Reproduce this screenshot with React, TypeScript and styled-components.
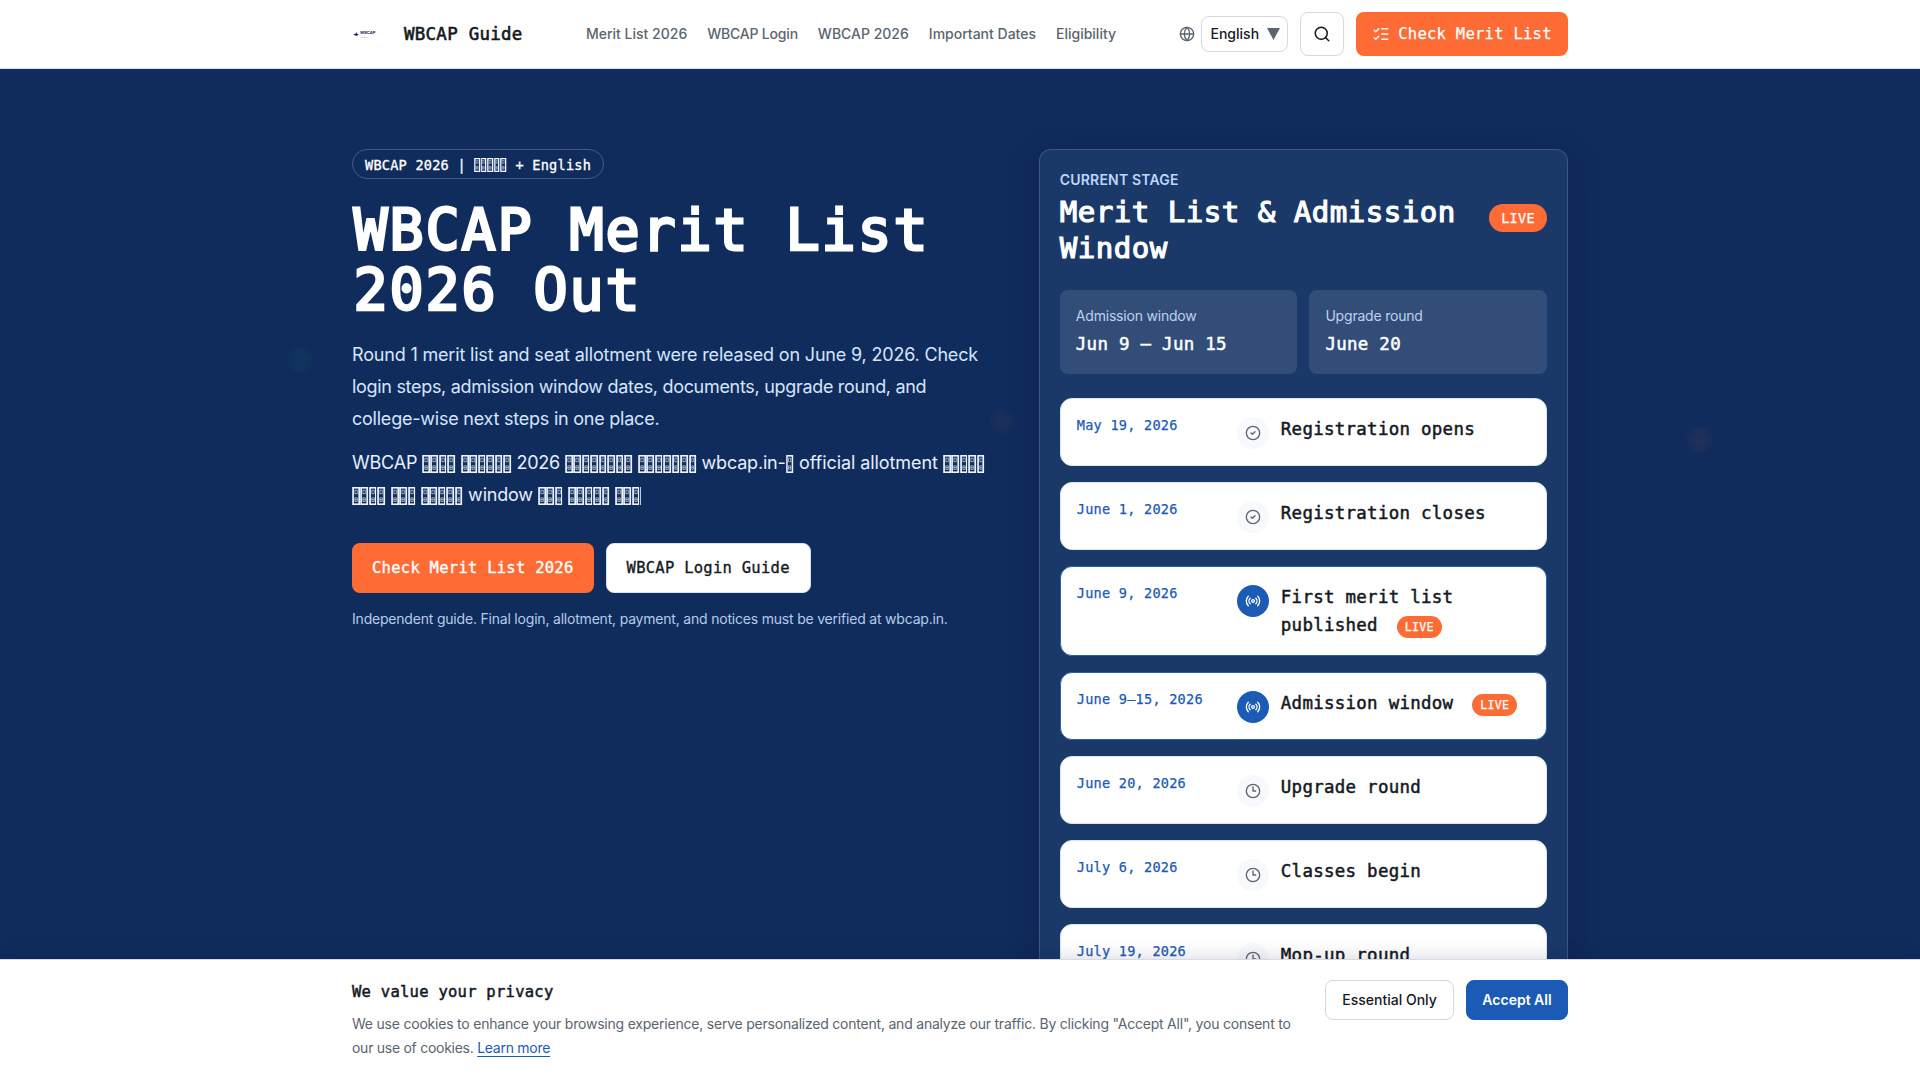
import React from "react";
import styled, { createGlobalStyle, css } from "styled-components";
import { Globe, Search, ListChecks, CircleCheck, Clock3, Radio } from "lucide-react";

const sans = `Inter, "Liberation Sans", sans-serif`;
const mono = `"DejaVu Sans Mono", "Liberation Mono", monospace`;

const Global = createGlobalStyle`
  * { box-sizing: border-box; }
  html, body { margin: 0; padding: 0; }
  body { height: 1080px; overflow: hidden; font-family: ${sans}; color: #15191f; background: #102c5c; }
  h1, h2, p { margin: 0; }
  a { text-decoration: none; color: inherit; }
`;

/* Monospace text on a 0.6em advance with a slightly reinforced stroke. */
const monoText = (size: number, weight = 0.4, scale = 0.97) => css`
  font-family: ${mono};
  font-size: ${size * scale}px;
  letter-spacing: ${size * (0.6 - 0.602 * scale)}px;
  -webkit-text-stroke: ${weight}px currentColor;
`;

const Page = styled.div`
  height: 1080px;
  display: flex;
  flex-direction: column;
  overflow: hidden;
`;

const Container = styled.div`
  width: 1216px;
  margin: 0 auto;
`;

const Header = styled.header`
  height: 69px;
  flex: none;
  background: #fff;
  border-bottom: 1px solid #d5dfee;
`;

const HeaderRow = styled(Container)`
  height: 68px;
  display: flex;
  align-items: center;
`;

const Brand = styled.a`
  display: flex;
  align-items: center;
  gap: 12px;
  width: 234px;
  white-space: nowrap;
  ${monoText(18, 0.6)}
`;

const Nav = styled.nav`
  display: flex;
  gap: 20px;
  flex: 1;
  padding-bottom: 1px;
  font-size: 14px;
  font-weight: 500;
  color: #5b6470;
  white-space: nowrap;
`;

const Tracked = styled.span<{ $ls: number }>`
  letter-spacing: ${(p) => p.$ls}px;
`;

const Actions = styled.div`
  display: flex;
  align-items: center;
  gap: 12px;
`;

const Language = styled.div`
  display: flex;
  align-items: center;
  gap: 6px;
  color: #5b6470;
`;

const Select = styled.div`
  width: 87px;
  height: 36px;
  padding: 0 7px 1px 8.5px;
  border: 1px solid #d5d8dd;
  border-radius: 8px;
  display: flex;
  align-items: center;
  justify-content: space-between;
  font-size: 14px;
  font-weight: 500;
  color: #15191f;
`;

const SearchButton = styled.button`
  width: 44px;
  height: 44px;
  padding: 0;
  border: 1px solid #d5d8dd;
  border-radius: 8px;
  background: #fff;
  color: #15191f;
  display: grid;
  place-items: center;
`;

const Cta = styled.a`
  width: 212px;
  height: 44px;
  border-radius: 8px;
  background: #ff6b35;
  color: #fff;
  display: flex;
  align-items: center;
  justify-content: center;
  gap: 8px;
  white-space: nowrap;
  ${monoText(16, 0.25)}
`;

const Hero = styled.main`
  flex: 1;
  min-height: 0;
  overflow: hidden;
  padding-top: 80px;
  background:
    radial-gradient(circle at 300px 291px, rgba(22, 160, 110, 0.08) 0, rgba(22, 160, 110, 0.06) 9px, transparent 15px),
    radial-gradient(circle at 1002px 353px, rgba(255, 107, 53, 0.06) 0, rgba(255, 107, 53, 0.04) 8px, transparent 14px),
    radial-gradient(circle at 1700px 371px, rgba(255, 107, 53, 0.07) 0, rgba(255, 107, 53, 0.05) 9px, transparent 15px),
    #102c5c;
`;

const HeroGrid = styled(Container)`
  display: grid;
  grid-template-columns: 1fr 529.2px;
  gap: 48px;
  align-items: start;
`;

const Intro = styled.section`
  display: flex;
  flex-direction: column;
  align-items: flex-start;
  white-space: nowrap;
`;

const Badge = styled.div`
  height: 30px;
  padding: 1px 12px 0;
  border: 1px solid rgba(255, 255, 255, 0.22);
  border-radius: 15px;
  display: flex;
  align-items: center;
  color: #fff;
  white-space: pre;
  ${monoText(14, 0.3)}
`;

const Title = styled.h1`
  margin: 21px 0 -1px;
  padding-left: 1.5px;
  font-weight: 400;
  line-height: 60px;
  color: #fff;
  ${monoText(60, 2.8, 0.945)}
`;

const Lead = styled.p<{ $top: number; $bright?: boolean }>`
  margin-top: ${(p) => p.$top}px;
  font-size: 18px;
  line-height: 32px;
  color: ${(p) => (p.$bright ? "#e6efff" : "#d5e5fb")};
`;

const boxTile = encodeURIComponent(
  `<svg xmlns="http://www.w3.org/2000/svg" viewBox="0 0 8.46 18" preserveAspectRatio="none"><g fill="none" stroke="#eef4ff"><rect x="1" y=".8" width="5.800" height="16.400" stroke-width="1.600"/><path d="M2.700 3.200h2.300v3.600h-2.300zM2.700 10.800h2.300v3.600h-2.300zM2.700 12.600h2.300" stroke-width=".7" stroke-opacity=".85"/></g></svg>`
);

/* A Bengali word shown as one narrow missing-glyph box per code point. */
const BoxedWord = styled.span<{ $count: number; $size: number }>`
  display: inline-block;
  overflow: hidden;
  width: ${(p) => p.$count * p.$size * 0.47}px;
  height: ${(p) => p.$size}px;
  font-size: ${(p) => p.$size * 0.5}px;
  line-height: ${(p) => p.$size}px;
  vertical-align: -4px;
  letter-spacing: 0;
  color: transparent;
  -webkit-text-stroke: 0;
  background: url("data:image/svg+xml,${boxTile}") 0 0 / ${(p) => p.$size * 0.47}px 100% repeat-x;
`;

const Bn = ({ size = 18, children }: { size?: number; children: string }) => (
  <BoxedWord lang="bn" $size={size} $count={Array.from(children).length}>{children}</BoxedWord>
);

const ButtonRow = styled.div`
  display: flex;
  gap: 12px;
  margin-top: 32px;
`;

const HeroButton = styled.a<{ $primary?: boolean }>`
  height: 50px;
  padding: 0 20px;
  border: ${(p) => (p.$primary ? "0" : "1px solid #d5dfee")};
  border-radius: 8px;
  background: ${(p) => (p.$primary ? "#ff6b35" : "#fff")};
  color: ${(p) => (p.$primary ? "#fff" : "#15191f")};
  display: flex;
  align-items: center;
  ${monoText(16, 0.35)}
`;

const Note = styled.p`
  margin-top: 16px;
  font-size: 14px;
  line-height: 20px;
  letter-spacing: -0.2px;
  color: #b5cbea;
`;

const Panel = styled.section`
  height: 1000px;
  padding: 20px;
  border: 1px solid rgba(255, 255, 255, 0.16);
  border-radius: 12px;
  background: #1a3969;
  box-shadow: 0 8px 32px rgba(5, 20, 60, 0.22);
`;

const StageHead = styled.div`
  display: flex;
  align-items: center;
  justify-content: space-between;
`;

const StageLabel = styled.div`
  font-size: 14px;
  line-height: 20px;
  font-weight: 600;
  letter-spacing: 0.18px;
  color: #bfd6fa;
`;

const StageTitle = styled.h2`
  margin: 4px 0 0;
  font-weight: 400;
  line-height: 36px;
  color: #fff;
  white-space: nowrap;
  ${monoText(30, 1.2)}
`;

const LivePill = styled.span<{ $small?: boolean }>`
  display: inline-flex;
  align-items: center;
  justify-content: center;
  width: ${(p) => (p.$small ? 45 : 58)}px;
  height: ${(p) => (p.$small ? 22 : 28)}px;
  margin-left: ${(p) => (p.$small ? 8 : 0)}px;
  position: relative;
  top: ${(p) => (p.$small ? 1 : 0)}px;
  border-radius: 14px;
  background: #ff6b35;
  color: #fff;
  vertical-align: ${(p) => (p.$small ? "middle" : "baseline")};
  ${(p) => monoText(p.$small ? 12 : 14, 0.25)}
`;

const Stats = styled.div`
  display: grid;
  grid-template-columns: 1fr 1fr;
  gap: 12px;
  margin: 24px 0;
`;

const Stat = styled.div`
  height: 84px;
  padding: 16px;
  border-radius: 8px;
  background: rgba(255, 255, 255, 0.105);
`;

const StatLabel = styled.div`
  font-size: 14px;
  line-height: 20px;
  letter-spacing: -0.2px;
  color: #bfd2ef;
`;

const StatValue = styled.div`
  margin-top: 4px;
  line-height: 28px;
  color: #fff;
  ${monoText(18, 0.5)}
`;

const Timeline = styled.div`
  display: flex;
  flex-direction: column;
  gap: 16px;
`;

const Stop = styled.article<{ $live: boolean }>`
  padding: 16px;
  border: 1px solid ${(p) => (p.$live ? "#2a62b2" : "#dde4ee")};
  border-radius: 12px;
  background: #fff;
  display: grid;
  grid-template-columns: 144px 1fr;
  gap: 16px;
`;

const StopDate = styled.time`
  line-height: 20px;
  color: #1b5ab5;
  white-space: nowrap;
  ${monoText(14, 0.25)}
`;

const StopBody = styled.div`
  display: flex;
  align-items: flex-start;
  gap: 12px;
`;

const StopIcon = styled.span<{ $live: boolean }>`
  flex: none;
  width: 32px;
  height: 32px;
  margin-top: 2px;
  border-radius: 50%;
  background: ${(p) => (p.$live ? "#1b5ab5" : "#f8f9fc")};
  color: ${(p) => (p.$live ? "#fff" : "#5b6470")};
  display: grid;
  place-items: center;
`;

const StopTitle = styled.div`
  line-height: 28px;
  ${monoText(18, 0.5)}
`;

const CookieBar = styled.aside`
  height: 121px;
  flex: none;
  border-top: 1px solid #d5dae2;
  background: #fff;
  box-shadow: 0 -4px 16px rgba(0, 10, 40, 0.12);
  z-index: 1;
`;

const CookieRow = styled(Container)`
  display: flex;
  align-items: flex-start;
  justify-content: space-between;
  padding-top: 20px;
`;

const CookieTitle = styled.div`
  line-height: 24px;
  ${monoText(16, 0.5)}
`;

const CookieText = styled.p`
  margin-top: 8px;
  font-size: 14px;
  line-height: 24px;
  letter-spacing: -0.215px;
  color: #5b6470;
  white-space: nowrap;
`;

const LearnMore = styled.a`
  color: #1b5ab5;
  text-decoration: underline;
  text-underline-offset: 3px;
`;

const CookieActions = styled.div`
  display: flex;
  gap: 12px;
`;

const CookieButton = styled.button<{ $primary?: boolean; $w: number }>`
  width: ${(p) => p.$w}px;
  height: 40px;
  padding: 0 0 1px;
  border: 1px solid ${(p) => (p.$primary ? "#1b5ab5" : "#d5d8dd")};
  border-radius: 8px;
  background: ${(p) => (p.$primary ? "#1b5ab5" : "#fff")};
  color: ${(p) => (p.$primary ? "#fff" : "#15191f")};
  font: ${(p) => (p.$primary ? 600 : 500)} 14px ${sans};
`;

type State = "done" | "live" | "next";
const stops: { date: string; title: string; state: State }[] = [
  { date: "May 19, 2026", title: "Registration opens", state: "done" },
  { date: "June 1, 2026", title: "Registration closes", state: "done" },
  { date: "June 9, 2026", title: "First merit list published", state: "live" },
  { date: "June 9–15, 2026", title: "Admission window", state: "live" },
  { date: "June 20, 2026", title: "Upgrade round", state: "next" },
  { date: "July 6, 2026", title: "Classes begin", state: "next" },
  { date: "July 19, 2026", title: "Mop-up round", state: "next" },
];
const stateIcon = { done: CircleCheck, live: Radio, next: Clock3 };

const links: [string, number][] = [
  ["Merit List 2026", 0],
  ["WBCAP Login", -0.2],
  ["WBCAP 2026", 0],
  ["Important Dates", 0],
  ["Eligibility", 0],
];

const Logo = () => (
  <svg width="40" height="40" viewBox="0 0 40 40">
    <path d="M1.500 20.500l2-.8.700-2 .7 2 2 .8-2 1.200H3.500z" fill="#25245f" />
    <text x="8" y="20.400" fontSize="4" fontWeight="700" fontFamily="Inter, sans-serif" fill="#25245f" letterSpacing="0" strokeWidth="0">WBCAP</text>
    <path d="M8.500 23.300h7.500" stroke="#a9bfe0" strokeWidth=".8" strokeDasharray="1.200 .5" />
  </svg>
);

export default function App() {
  return (
    <Page>
      <Global />
      <Header>
        <HeaderRow>
          <Brand><Logo />WBCAP Guide</Brand>
          <Nav>{links.map(([label, ls]) => <Tracked as="a" key={label} $ls={ls}>{label}</Tracked>)}</Nav>
          <Actions>
            <Language>
              <Globe size={16} />
              <Select>
                English
                <svg width="13" height="12" viewBox="0 0 13 12"><path d="M0 0h13L6.500 12z" fill="#5b6470" /></svg>
              </Select>
            </Language>
            <SearchButton><Search size={18} /></SearchButton>
            <Cta><ListChecks size={18} />Check Merit List</Cta>
          </Actions>
        </HeaderRow>
      </Header>
      <Hero>
        <HeroGrid>
          <Intro>
            <Badge>WBCAP 2026 | <Bn size={14}>বাংলা</Bn> + English</Badge>
            <Title>WBCAP Merit List<br />2026 Out</Title>
            <Lead $top={20}>
              <Tracked $ls={-0.18}>Round 1 merit list and seat allotment were released on June 9, 2026. Check</Tracked><br />
              <Tracked $ls={-0.31}>login steps, admission window dates, documents, upgrade round, and</Tracked><br />
              <Tracked $ls={-0.23}>college-wise next steps in one place.</Tracked>
            </Lead>
            <Lead $top={12} $bright>
              <Tracked $ls={-0.2}>
                WBCAP <Bn>মেধা</Bn> <Bn>তালিকা</Bn> 2026 <Bn>প্রকাশিত</Bn> <Bn>{"হয\u09BCেছে।"}</Bn> wbcap.in-<Bn>এ</Bn><Tracked $ls={-0.08}> official allotment </Tracked><Bn>দেখুন</Bn><br />
                <Bn>দেখে</Bn> <Bn>এবং</Bn> <Bn>ভর্তি</Bn> window <Bn>শেষ</Bn> <Bn>{"হও\u09DFার"}</Bn> <Bn>আগে</Bn>
              </Tracked>
            </Lead>
            <ButtonRow>
              <HeroButton $primary>Check Merit List 2026</HeroButton>
              <HeroButton>WBCAP Login Guide</HeroButton>
            </ButtonRow>
            <Note>Independent guide. Final login, allotment, payment, and notices must be verified at wbcap.in.</Note>
          </Intro>
          <Panel>
            <StageHead>
              <div>
                <StageLabel>CURRENT STAGE</StageLabel>
                <StageTitle>Merit List &amp; Admission<br />Window</StageTitle>
              </div>
              <LivePill>LIVE</LivePill>
            </StageHead>
            <Stats>
              <Stat><StatLabel>Admission window</StatLabel><StatValue>Jun 9 – Jun 15</StatValue></Stat>
              <Stat><StatLabel>Upgrade round</StatLabel><StatValue>June 20</StatValue></Stat>
            </Stats>
            <Timeline>
              {stops.map(({ date, title, state }) => {
                const Icon = stateIcon[state];
                const live = state === "live";
                return (
                  <Stop key={date} $live={live}>
                    <StopDate>{date}</StopDate>
                    <StopBody>
                      <StopIcon $live={live}><Icon size={16} /></StopIcon>
                      <StopTitle>{title}{live && <> <LivePill $small>LIVE</LivePill></>}</StopTitle>
                    </StopBody>
                  </Stop>
                );
              })}
            </Timeline>
          </Panel>
        </HeroGrid>
      </Hero>
      <CookieBar>
        <CookieRow>
          <div>
            <CookieTitle>We value your privacy</CookieTitle>
            <CookieText>
              We use cookies to enhance your browsing experience, serve personalized content, and analyze our traffic. By clicking "Accept All", you consent to<br />
              <Tracked $ls={-0.27}>our use of cookies. <LearnMore>Learn more</LearnMore></Tracked>
            </CookieText>
          </div>
          <CookieActions>
            <CookieButton $w={129}>Essential Only</CookieButton>
            <CookieButton $w={102} $primary>Accept All</CookieButton>
          </CookieActions>
        </CookieRow>
      </CookieBar>
    </Page>
  );
}
